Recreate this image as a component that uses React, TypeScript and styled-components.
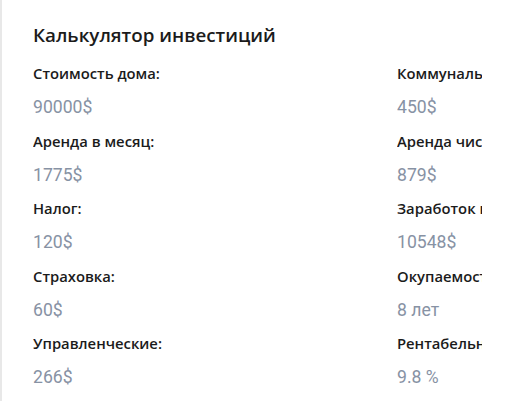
import styled, { createGlobalStyle } from "styled-components";

const GlobalStyle = createGlobalStyle`
  body {
    margin: 0;
    background: #ffffff;
  }
`;

const Card = styled.section`
  box-sizing: border-box;
  height: 401px;
  border-left: 2px solid #e8e8e8;
  padding: 23px 0 0 31px;
  overflow: hidden;
`;

const Title = styled.h2`
  margin: 0 0 16px;
  font-family: "Open Sans", sans-serif;
  font-size: 18.8px;
  font-weight: 600;
  line-height: 24px;
  color: #1b1b1b;
`;

const Grid = styled.div`
  display: grid;
  grid-template-columns: 364px 85px;
`;

// the right column is narrower than its labels, they get clipped
const Column = styled.div`
  display: flex;
  flex-direction: column;
  overflow: hidden;
`;

const Label = styled.div`
  font-family: "Open Sans", sans-serif;
  font-size: 14.8px;
  font-weight: 600;
  line-height: 20px;
  color: #1b1b1b;
  white-space: nowrap;
`;

const Value = styled.div`
  margin: 10px 0 9.5px;
  font-family: Roboto, sans-serif;
  font-size: 17.6px;
  line-height: 28px;
  color: #8792a4;
  white-space: nowrap;
`;

const left = [
  ["Стоимость дома:", "90000$"],
  ["Аренда в месяц:", "1775$"],
  ["Налог:", "120$"],
  ["Страховка:", "60$"],
  ["Управленческие:", "266$"],
];

const right = [
  ["Коммунальные:", "450$"],
  ["Аренда чистая:", "879$"],
  ["Заработок в год:", "10548$"],
  ["Окупаемость:", "8 лет"],
  ["Рентабельность:", "9.8 %"],
];

export default function App() {
  return (
    <>
      <GlobalStyle />
      <Card>
        <Title>Калькулятор инвестиций</Title>
        <Grid>
          {[left, right].map((items, i) => (
            <Column key={i}>
              {items.map(([label, value]) => (
                <div key={label}>
                  <Label>{label}</Label>
                  <Value>{value}</Value>
                </div>
              ))}
            </Column>
          ))}
        </Grid>
      </Card>
    </>
  );
}
